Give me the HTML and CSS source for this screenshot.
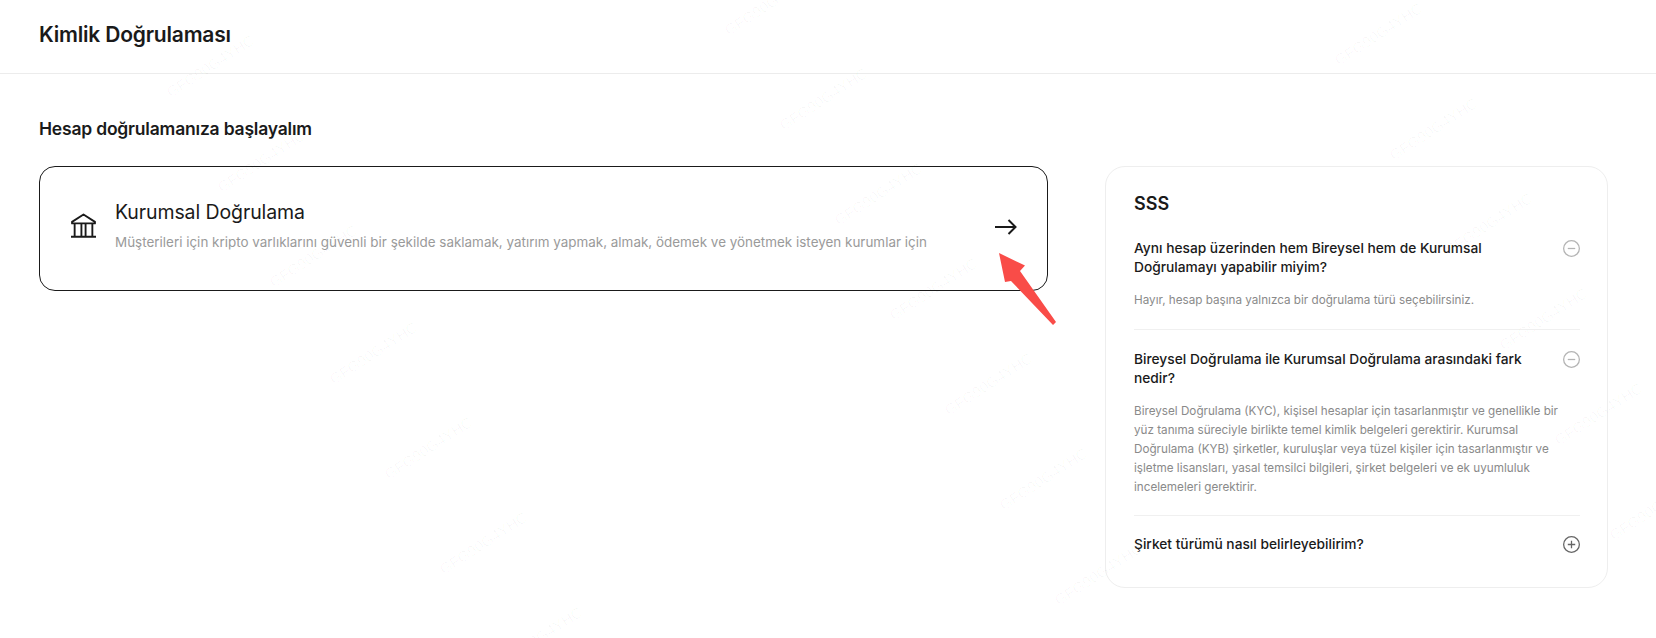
FILE: index.html
```html
<!DOCTYPE html>
<html lang="tr">
<head>
<meta charset="utf-8">
<title>Kimlik Doğrulaması</title>
<link rel="stylesheet" href="styles.css">
</head>
<body>
<header class="topbar">
    <h1 class="page-title">Kimlik Doğrulaması</h1>
</header>

<main class="content">
    <h2 class="section-title">Hesap doğrulamanıza başlayalım</h2>
    <div class="columns">
        <a class="verify-card" href="#">
            <svg class="bank-icon" viewBox="0 0 24 24" fill="none" stroke="currentColor" stroke-width="1.800">
                <path d="M1 8.500 12 1.500l11 7V10H1z" stroke-linejoin="round"/>
                <path d="M3.500 10v12M10 10v12M14 10v12M20.500 10v12M0 22.800h24"/>
            </svg>
            <div class="verify-text">
                <div class="verify-title">Kurumsal Doğrulama</div>
                <div class="verify-desc">Müşterileri için kripto varlıklarını güvenli bir şekilde saklamak, yatırım yapmak, almak, ödemek ve yönetmek isteyen kurumlar için</div>
            </div>
            <svg class="arrow-icon" viewBox="0 0 22 18" fill="none" stroke="currentColor" stroke-width="2">
                <path d="M0 9h20.500M13.500 2l7 7-7 7"/>
            </svg>
        </a>

        <aside class="faq">
            <h3 class="faq-title">SSS</h3>
            <div class="faq-item">
                <div class="faq-head">
                    <div class="faq-q">Aynı hesap üzerinden hem Bireysel hem de Kurumsal Doğrulamayı yapabilir miyim?</div>
                    <svg class="toggle open" viewBox="0 0 16 16" fill="none" stroke="currentColor" stroke-width="1.200">
                        <circle cx="8" cy="8" r="7.400"/><path d="M4.500 8h7"/>
                    </svg>
                </div>
                <p class="faq-a">Hayır, hesap başına yalnızca bir doğrulama türü seçebilirsiniz.</p>
            </div>
            <div class="faq-item">
                <div class="faq-head">
                    <div class="faq-q">Bireysel Doğrulama ile Kurumsal Doğrulama arasındaki fark nedir?</div>
                    <svg class="toggle open" viewBox="0 0 16 16" fill="none" stroke="currentColor" stroke-width="1.200">
                        <circle cx="8" cy="8" r="7.400"/><path d="M4.500 8h7"/>
                    </svg>
                </div>
                <p class="faq-a">Bireysel Doğrulama (KYC), kişisel hesaplar için tasarlanmıştır ve genellikle bir yüz tanıma süreciyle birlikte temel kimlik belgeleri gerektirir. Kurumsal Doğrulama (KYB) şirketler, kuruluşlar veya tüzel kişiler için tasarlanmıştır ve işletme lisansları, yasal temsilci bilgileri, şirket belgeleri ve ek uyumluluk incelemeleri gerektirir.</p>
            </div>
            <div class="faq-item">
                <div class="faq-head">
                    <div class="faq-q">Şirket türümü nasıl belirleyebilirim?</div>
                    <svg class="toggle" viewBox="0 0 16 16" fill="none" stroke="currentColor" stroke-width="1.200">
                        <circle cx="8" cy="8" r="7.400"/><path d="M4.500 8h7M8 4.500v7"/>
                    </svg>
                </div>
            </div>
        </aside>
    </div>
</main>

<!-- red arrow drawn over the screenshot -->
<svg class="callout" viewBox="0 0 70 80">
    <path d="M9 1 35 13.500 30 19 66 70 63 73 21 29 15 30z"/>
</svg>

<!-- account watermark -->
<svg class="watermark" viewBox="0 0 1656 638">
    <g transform="translate(14 -4)">
    <text x="157" y="102" transform="rotate(-33 157 102)">GFG90G4YHC</text>
    <text x="208" y="197" transform="rotate(-33 208 197)">GFG90G4YHC</text>
    <text x="260" y="292" transform="rotate(-33 260 292)">GFG90G4YHC</text>
    <text x="320" y="389" transform="rotate(-33 320 389)">GFG90G4YHC</text>
    <text x="375" y="484" transform="rotate(-33 375 484)">GFG90G4YHC</text>
    <text x="430" y="579" transform="rotate(-33 430 579)">GFG90G4YHC</text>
    <text x="485" y="674" transform="rotate(-33 485 674)">GFG90G4YHC</text>
    <text x="102" y="7" transform="rotate(-33 102 7)">GFG90G4YHC</text>
    <text x="715" y="40" transform="rotate(-33 715 40)">GFG90G4YHC</text>
    <text x="770" y="135" transform="rotate(-33 770 135)">GFG90G4YHC</text>
    <text x="825" y="230" transform="rotate(-33 825 230)">GFG90G4YHC</text>
    <text x="880" y="325" transform="rotate(-33 880 325)">GFG90G4YHC</text>
    <text x="935" y="420" transform="rotate(-33 935 420)">GFG90G4YHC</text>
    <text x="990" y="515" transform="rotate(-33 990 515)">GFG90G4YHC</text>
    <text x="1045" y="610" transform="rotate(-33 1045 610)">GFG90G4YHC</text>
    <text x="1325" y="70" transform="rotate(-33 1325 70)">GFG90G4YHC</text>
    <text x="1380" y="165" transform="rotate(-33 1380 165)">GFG90G4YHC</text>
    <text x="1435" y="260" transform="rotate(-33 1435 260)">GFG90G4YHC</text>
    <text x="1490" y="355" transform="rotate(-33 1490 355)">GFG90G4YHC</text>
    <text x="1545" y="450" transform="rotate(-33 1545 450)">GFG90G4YHC</text>
    <text x="1600" y="545" transform="rotate(-33 1600 545)">GFG90G4YHC</text>
    </g>
</svg>
</body>
</html>
```

FILE: styles.css
```css
* {
    box-sizing: border-box;
}
html, body {
    margin: 0;
    height: 100%;
}
body {
    position: relative;
    overflow: hidden;
    background: #fff;
    color: #1a1a1a;
    font-family: Inter, "Liberation Sans", sans-serif;
}
.topbar {
    height: 74px;
    padding: 0 39px 4px;
    display: flex;
    align-items: center;
    border-bottom: 1px solid #ececec;
}
.page-title {
    margin: 0;
    font-size: 21px;
    font-weight: 600;
    letter-spacing: -0.2px;
}
.content {
    padding: 43px 48px 0 39px;
}
.section-title {
    margin: 0;
    font-size: 17.500px;
    line-height: 24px;
    font-weight: 600;
    letter-spacing: -0.2px;
}
.columns {
    margin-top: 25px;
    display: flex;
    align-items: flex-start;
    gap: 57px;
}
.verify-card {
    flex: 1;
    height: 125px;
    padding: 0 30px 7px 31px;
    display: flex;
    align-items: center;
    border: 1px solid #1a1a1a;
    border-radius: 16px;
    color: inherit;
    text-decoration: none;
}
.bank-icon {
    width: 25px;
    height: 25px;
    flex: none;
    margin-right: 19px;
}
.verify-text {
    flex: 1;
}
.verify-title {
    font-size: 19.500px;
    line-height: 26px;
    letter-spacing: -0.1px;
}
.verify-desc {
    margin-top: 7px;
    font-size: 13.450px;
    line-height: 20px;
    color: #9a9a9a;
}
.arrow-icon {
    width: 22px;
    height: 18px;
    flex: none;
    margin-top: 4px;
}
.faq {
    width: 503px;
    flex: none;
    height: 422px;
    padding: 25px 27px 0 28px;
    border: 1px solid #eeeeee;
    border-radius: 20px;
}
.faq-title {
    margin: 0 0 3px;
    font-size: 18px;
    line-height: 24px;
    font-weight: 600;
}
.faq-item {
    padding: 20px 0 18.500px;
    border-bottom: 1px solid #f0f0f0;
}
.faq-item:last-child {
    padding-top: 19px;
    border-bottom: 0;
}
.faq-head {
    display: flex;
    justify-content: space-between;
    align-items: flex-start;
    gap: 30px;
}
.faq-q {
    font-size: 13.750px;
    line-height: 19px;
    font-weight: 500;
}
.toggle {
    width: 17px;
    height: 17px;
    flex: none;
    margin: 1px 0 0;
    color: #666;
}
.toggle.open {
    color: #b4b4b4;
}
.faq-a {
    margin: 14px 0 0;
    font-size: 11.700px;
    line-height: 19px;
    color: #8a8a8a;
}
.callout {
    position: absolute;
    left: 990px;
    top: 252px;
    width: 70px;
    height: 80px;
}
.callout path {
    fill: #f94c48;
}
.watermark {
    position: absolute;
    left: 0;
    top: 0;
    width: 1656px;
    height: 638px;
    pointer-events: none;
}
.watermark text {
    font-family: "Liberation Sans", sans-serif;
    font-size: 15px;
    fill: #000;
    fill-opacity: 0.03;
}
```
